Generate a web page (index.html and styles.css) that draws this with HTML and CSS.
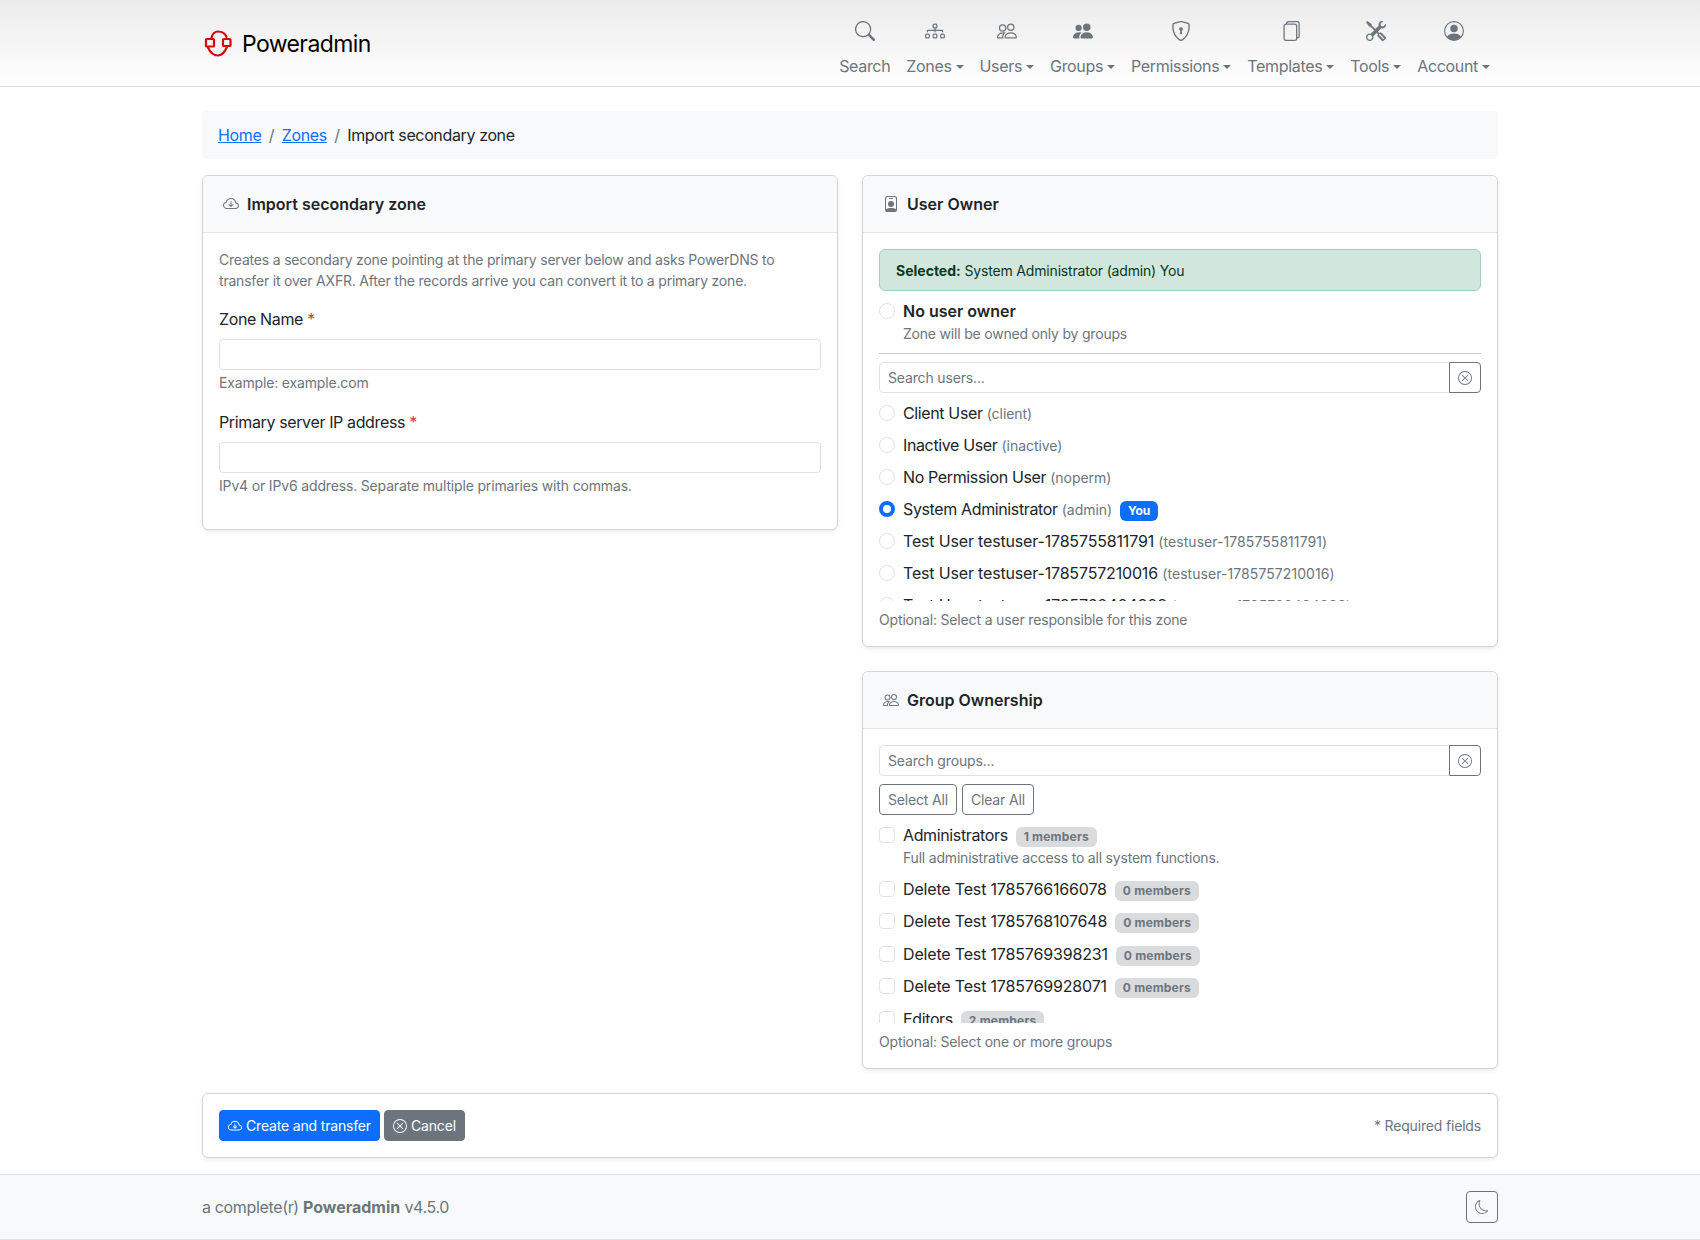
FILE: index.html
```html
<!DOCTYPE html>
<html lang="en">
<head>
<meta charset="utf-8">
<title>Poweradmin</title>
<link rel="stylesheet" href="styles.css">
</head>
<body>
<svg class="sprite" aria-hidden="true">
  <symbol id="i-search" viewBox="0 0 16 16"><path d="M11.742 10.344a6.5 6.5 0 1 0-1.397 1.398h-.001c.03.04.062.078.098.115l3.85 3.85a1 1 0 0 0 1.415-1.414l-3.85-3.85a1.007 1.007 0 0 0-.115-.1zM12 6.5a5.5 5.5 0 1 1-11 0 5.5 5.5 0 0 1 11 0z"/></symbol>
  <symbol id="i-diagram" viewBox="0 0 16 16"><path fill-rule="evenodd" d="M6 3.5A1.5 1.5 0 0 1 7.5 2h1A1.5 1.5 0 0 1 10 3.5v1A1.5 1.5 0 0 1 8.5 6v1H14a.5.5 0 0 1 .5.5v1a.5.5 0 0 1-1 0V8h-5v.5a.5.5 0 0 1-1 0V8h-5v.5a.5.5 0 0 1-1 0v-1A.5.5 0 0 1 2 7h5.5V6A1.5 1.5 0 0 1 6 4.5v-1zM8.5 5a.5.5 0 0 0 .5-.5v-1a.5.5 0 0 0-.5-.5h-1a.5.5 0 0 0-.5.5v1a.5.5 0 0 0 .5.5h1zM0 11.5A1.5 1.5 0 0 1 1.5 10h1A1.5 1.5 0 0 1 4 11.5v1A1.5 1.5 0 0 1 2.5 14h-1A1.5 1.5 0 0 1 0 12.5v-1zm1.5-.5a.5.5 0 0 0-.5.5v1a.5.5 0 0 0 .5.5h1a.5.5 0 0 0 .5-.5v-1a.5.5 0 0 0-.5-.5h-1zm4.5.5A1.5 1.5 0 0 1 7.5 10h1a1.5 1.5 0 0 1 1.5 1.5v1A1.5 1.5 0 0 1 8.5 14h-1A1.5 1.5 0 0 1 6 12.5v-1zm1.5-.5a.5.5 0 0 0-.5.5v1a.5.5 0 0 0 .5.5h1a.5.5 0 0 0 .5-.5v-1a.5.5 0 0 0-.5-.5h-1zm4.5.5a1.5 1.5 0 0 1 1.5-1.5h1a1.5 1.5 0 0 1 1.5 1.5v1a1.5 1.5 0 0 1-1.5 1.5h-1a1.5 1.5 0 0 1-1.5-1.5v-1zm1.5-.5a.5.5 0 0 0-.5.5v1a.5.5 0 0 0 .5.5h1a.5.5 0 0 0 .5-.5v-1a.5.5 0 0 0-.5-.5h-1z"/></symbol>
  <symbol id="i-people" viewBox="0 0 16 16"><path d="M15 14s1 0 1-1-1-4-5-4-5 3-5 4 1 1 1 1h8Zm-7.978-1A.261.261 0 0 1 7 12.996c.001-.264.167-1.03.76-1.72C8.312 10.629 9.282 10 11 10c1.717 0 2.687.63 3.24 1.276.593.69.758 1.457.76 1.72l-.008.002a.274.274 0 0 1-.014.002H7.022ZM11 7a2 2 0 1 0 0-4 2 2 0 0 0 0 4Zm3-2a3 3 0 1 1-6 0 3 3 0 0 1 6 0ZM6.936 9.28a5.88 5.88 0 0 0-1.23-.247A7.35 7.35 0 0 0 5 9c-4 0-5 3-5 4 0 .667.333 1 1 1h4.216A2.238 2.238 0 0 1 5 13c0-1.01.377-2.042 1.09-2.904.243-.294.526-.569.846-.816ZM4.92 10A5.493 5.493 0 0 0 4 13H1c0-.26.164-1.03.76-1.724.545-.636 1.492-1.256 3.16-1.275ZM1.5 5.5a3 3 0 1 1 6 0 3 3 0 0 1-6 0Zm3-2a2 2 0 1 0 0 4 2 2 0 0 0 0-4Z"/></symbol>
  <symbol id="i-people-fill" viewBox="0 0 16 16"><path d="M7 14s-1 0-1-1 1-4 5-4 5 3 5 4-1 1-1 1H7Zm4-6a3 3 0 1 0 0-6 3 3 0 0 0 0 6Zm-5.784 6A2.238 2.238 0 0 1 5 13c0-1.355.68-2.75 1.936-3.72A6.325 6.325 0 0 0 5 9c-4 0-5 3-5 4s1 1 1 1h4.216ZM4.5 8a2.5 2.5 0 1 0 0-5 2.5 2.5 0 0 0 0 5Z"/></symbol>
  <symbol id="i-shield" viewBox="0 0 16 16"><path d="M5.338 1.59a61.44 61.44 0 0 0-2.837.856.481.481 0 0 0-.328.39c-.554 4.157.726 7.19 2.253 9.188a10.725 10.725 0 0 0 2.287 2.233c.346.244.652.42.893.533.12.057.218.095.293.118a.55.55 0 0 0 .101.025.615.615 0 0 0 .1-.025c.076-.023.174-.061.294-.118.24-.113.547-.29.893-.533a10.726 10.726 0 0 0 2.287-2.233c1.527-1.997 2.807-5.031 2.253-9.188a.48.48 0 0 0-.328-.39c-.651-.213-1.75-.56-2.837-.855C9.552 1.29 8.531 1.067 8 1.067c-.53 0-1.552.223-2.662.524zM5.072.56C6.157.265 7.31 0 8 0s1.843.265 2.928.56c1.11.3 2.229.655 2.887.87a1.54 1.54 0 0 1 1.044 1.262c.596 4.477-.787 7.795-2.465 9.99a11.775 11.775 0 0 1-2.517 2.453 7.159 7.159 0 0 1-1.048.625c-.28.132-.581.24-.829.24s-.548-.108-.829-.24a7.158 7.158 0 0 1-1.048-.625 11.777 11.777 0 0 1-2.517-2.453C1.928 10.487.545 7.169 1.141 2.692A1.54 1.54 0 0 1 2.185 1.43 62.456 62.456 0 0 1 5.072.56z"/><path d="M9.5 6.5a1.5 1.5 0 0 1-1 1.415l.385 1.99a.5.5 0 0 1-.491.595h-.788a.5.5 0 0 1-.49-.595l.384-1.99a1.5 1.5 0 1 1 2-1.415z"/></symbol>
  <symbol id="i-files" viewBox="0 0 16 16"><path d="M13 0H6a2 2 0 0 0-2 2 2 2 0 0 0-2 2v10a2 2 0 0 0 2 2h7a2 2 0 0 0 2-2 2 2 0 0 0 2-2V2a2 2 0 0 0-2-2zm0 13V4a2 2 0 0 0-2-2H5a1 1 0 0 1 1-1h7a1 1 0 0 1 1 1v10a1 1 0 0 1-1 1zM3 4a1 1 0 0 1 1-1h7a1 1 0 0 1 1 1v10a1 1 0 0 1-1 1H4a1 1 0 0 1-1-1V4z"/></symbol>
  <symbol id="i-tools" viewBox="0 0 16 16"><path d="M1 0 0 1l2.2 3.081a1 1 0 0 0 .815.419h.07a1 1 0 0 1 .708.293l2.675 2.675-2.617 2.654A3.003 3.003 0 0 0 0 13a3 3 0 1 0 5.878-.851l2.654-2.617.968.968-.305.914a1 1 0 0 0 .242 1.023l3.27 3.27a.997.997 0 0 0 1.414 0l1.586-1.586a.997.997 0 0 0 0-1.414l-3.27-3.27a1 1 0 0 0-1.023-.242L10.5 9.5l-.96-.96 2.68-2.643A3.005 3.005 0 0 0 16 3c0-.269-.035-.53-.102-.777l-2.14 2.141L12 4l-.364-1.757L13.777.102a3 3 0 0 0-3.675 3.68L7.462 6.46 4.793 3.793a1 1 0 0 1-.293-.707v-.071a1 1 0 0 0-.419-.814L1 0Zm9.646 10.646a.5.5 0 0 1 .708 0l2.914 2.915a.5.5 0 0 1-.707.707l-2.915-2.914a.5.5 0 0 1 0-.708ZM3 11l.471.242.529.026.287.445.445.287.026.529L5 13l-.242.471-.026.529-.445.287-.287.445-.529.026L3 15l-.471-.242L2 14.732l-.287-.445L1.268 14l-.026-.529L1 13l.242-.471.026-.529.445-.287.287-.445.529-.026L3 11Z"/></symbol>
  <symbol id="i-person" viewBox="0 0 16 16"><path d="M11 6a3 3 0 1 1-6 0 3 3 0 0 1 6 0z"/><path fill-rule="evenodd" d="M0 8a8 8 0 1 1 16 0A8 8 0 0 1 0 8zm8-7a7 7 0 0 0-5.468 11.37C3.242 11.226 4.805 10 8 10s4.757 1.225 5.468 2.37A7 7 0 0 0 8 1z"/></symbol>
  <symbol id="i-cloud" viewBox="0 0 16 16"><path fill-rule="evenodd" d="M7.646 10.854a.5.5 0 0 0 .708 0l2-2a.5.5 0 0 0-.708-.708L8.5 9.293V5.5a.5.5 0 0 0-1 0v3.793L6.354 8.146a.5.5 0 1 0-.708.708l2 2z"/><path d="M4.406 3.342A5.53 5.53 0 0 1 8 2c2.69 0 4.923 2 5.166 4.579C14.758 6.804 16 8.137 16 9.773 16 11.569 14.502 13 12.687 13H3.781C1.708 13 0 11.366 0 9.318c0-1.763 1.266-3.223 2.942-3.593.143-.863.698-1.723 1.464-2.383zm.653.757c-.757.653-1.153 1.44-1.153 2.056v.448l-.445.049C2.064 6.805 1 7.952 1 9.318 1 10.785 2.23 12 3.781 12h8.906C13.98 12 15 10.988 15 9.773c0-1.216-1.02-2.228-2.313-2.228h-.5v-.5C12.188 4.825 10.328 3 8 3a4.53 4.53 0 0 0-2.941 1.1z"/></symbol>
  <symbol id="i-badge" viewBox="0 0 16 16"><path d="M6.5 2a.5.5 0 0 0 0 1h3a.5.5 0 0 0 0-1h-3zM11 8a3 3 0 1 1-6 0 3 3 0 0 1 6 0z"/><path d="M4.5 0A2.5 2.5 0 0 0 2 2.5V14a2 2 0 0 0 2 2h8a2 2 0 0 0 2-2V2.5A2.5 2.5 0 0 0 11.5 0h-7zM3 2.5A1.5 1.5 0 0 1 4.5 1h7A1.5 1.5 0 0 1 13 2.5v10.795a4.2 4.2 0 0 0-.776-.492C11.392 12.387 10.063 12 8 12s-3.392.387-4.224.803a4.2 4.2 0 0 0-.776.492V2.5z"/></symbol>
  <symbol id="i-x" viewBox="0 0 16 16"><path d="M8 15A7 7 0 1 1 8 1a7 7 0 0 1 0 14zm0 1A8 8 0 1 0 8 0a8 8 0 0 0 0 16z"/><path d="M4.646 4.646a.5.5 0 0 1 .708 0L8 7.293l2.646-2.647a.5.5 0 0 1 .708.708L8.707 8l2.647 2.646a.5.5 0 0 1-.708.708L8 8.707l-2.646 2.647a.5.5 0 0 1-.708-.708L7.293 8 4.646 5.354a.5.5 0 0 1 0-.708z"/></symbol>
  <symbol id="i-moon" viewBox="0 0 16 16"><path d="M6 .278a.768.768 0 0 1 .08.858 7.208 7.208 0 0 0-.878 3.46c0 4.021 3.278 7.277 7.318 7.277.527 0 1.04-.055 1.533-.16a.787.787 0 0 1 .81.316.733.733 0 0 1-.031.893A8.349 8.349 0 0 1 8.344 16C3.734 16 0 12.286 0 7.71 0 4.266 2.114 1.312 5.234.06A.752.752 0 0 1 6 .278zM4.858 1.311A7.269 7.269 0 0 0 1.025 7.71c0 4.02 3.279 7.276 7.319 7.276a7.316 7.316 0 0 0 5.205-2.162c-.337.042-.68.063-1.029.063-4.61 0-8.343-3.714-8.343-8.29 0-1.167.242-2.278.681-3.286z"/></symbol>
</svg>

<header class="topbar">
  <div class="container topbar-inner">
    <a class="brand" href="#">
      <svg class="brand-logo" viewBox="0 0 30 28">
        <path d="M9.500 8C10 4 13 1.500 16 1.500C20 1.500 23 3 24.500 7M6 17.500C8 22 12 25.500 16 25.500C20 25.500 23 21.500 25 17" stroke-linecap="round"/>
        <rect x="4" y="9" width="8" height="7.500" rx="0.800"/>
        <rect x="21" y="9" width="7.500" height="7" rx="0.800"/>
      </svg>
      <span class="brand-name">Poweradmin</span>
    </a>
    <nav class="nav">
      <a class="nav-link" href="#"><svg class="nav-icon"><use href="#i-search"/></svg><span>Search</span></a>
      <a class="nav-link" href="#"><svg class="nav-icon"><use href="#i-diagram"/></svg><span class="caret">Zones</span></a>
      <a class="nav-link" href="#"><svg class="nav-icon"><use href="#i-people"/></svg><span class="caret">Users</span></a>
      <a class="nav-link" href="#"><svg class="nav-icon"><use href="#i-people-fill"/></svg><span class="caret">Groups</span></a>
      <a class="nav-link" href="#"><svg class="nav-icon"><use href="#i-shield"/></svg><span class="caret">Permissions</span></a>
      <a class="nav-link" href="#"><svg class="nav-icon"><use href="#i-files"/></svg><span class="caret">Templates</span></a>
      <a class="nav-link" href="#"><svg class="nav-icon"><use href="#i-tools"/></svg><span class="caret">Tools</span></a>
      <a class="nav-link" href="#"><svg class="nav-icon"><use href="#i-person"/></svg><span class="caret">Account</span></a>
    </nav>
  </div>
</header>

<main class="container main">
  <ol class="breadcrumb">
    <li><a href="#">Home</a></li>
    <li class="crumb-sep">/</li>
    <li><a href="#">Zones</a></li>
    <li class="crumb-sep">/</li>
    <li>Import secondary zone</li>
  </ol>

  <div class="columns">
    <div class="column">
      <section class="card">
        <h2 class="card-header"><svg class="head-icon"><use href="#i-cloud"/></svg>Import secondary zone</h2>
        <div class="card-body">
          <p class="intro">Creates a secondary zone pointing at the primary server below and asks PowerDNS to transfer it over AXFR. After the records arrive you can convert it to a primary zone.</p>
          <label class="field-label">Zone Name <span class="req">*</span></label>
          <input class="input" type="text">
          <div class="help">Example: example.com</div>
          <label class="field-label field-gap">Primary server IP address <span class="req">*</span></label>
          <input class="input" type="text">
          <div class="help help-last">IPv4 or IPv6 address. Separate multiple primaries with commas.</div>
        </div>
      </section>
    </div>

    <div class="column">
      <section class="card">
        <h2 class="card-header"><svg class="head-icon"><use href="#i-badge"/></svg>User Owner</h2>
        <div class="card-body">
          <div class="alert"><strong>Selected:</strong> System Administrator (admin) You</div>
          <div class="option">
            <span class="radio"></span>
            <span class="option-strong">No user owner</span>
            <div class="note">Zone will be owned only by groups</div>
          </div>
          <hr class="rule">
          <div class="input-group">
            <input class="input" type="text" placeholder="Search users...">
            <button class="icon-btn" type="button"><svg class="x-icon"><use href="#i-x"/></svg></button>
          </div>
          <div class="scroll-list">
            <div class="option"><span class="radio"></span>Client User <span class="handle">(client)</span></div>
            <div class="option"><span class="radio"></span>Inactive User <span class="handle">(inactive)</span></div>
            <div class="option"><span class="radio"></span>No Permission User <span class="handle">(noperm)</span></div>
            <div class="option"><span class="radio radio-on"></span>System Administrator <span class="handle">(admin)</span><span class="badge badge-blue">You</span></div>
            <div class="option option-num"><span class="radio"></span>Test User testuser-1785755811791 <span class="handle">(testuser-1785755811791)</span></div>
            <div class="option option-num"><span class="radio"></span>Test User testuser-1785757210016 <span class="handle">(testuser-1785757210016)</span></div>
            <div class="option option-num"><span class="radio"></span>Test User testuser-1785760404808 <span class="handle">(testuser-1785760404808)</span></div>
          </div>
          <div class="help help-end">Optional: Select a user responsible for this zone</div>
        </div>
      </section>

      <section class="card">
        <h2 class="card-header"><svg class="head-icon"><use href="#i-people"/></svg>Group Ownership</h2>
        <div class="card-body">
          <div class="input-group">
            <input class="input" type="text" placeholder="Search groups...">
            <button class="icon-btn" type="button"><svg class="x-icon"><use href="#i-x"/></svg></button>
          </div>
          <div class="btn-row">
            <button class="btn btn-outline" type="button">Select All</button>
            <button class="btn btn-outline" type="button">Clear All</button>
          </div>
          <div class="scroll-list scroll-list-groups">
            <div class="option option-first"><span class="check"></span>Administrators<span class="badge badge-grey">1 members</span>
              <div class="note">Full administrative access to all system functions.</div></div>
            <div class="option option-num"><span class="check"></span>Delete Test 1785766166078<span class="badge badge-grey">0 members</span></div>
            <div class="option option-num"><span class="check"></span>Delete Test 1785768107648<span class="badge badge-grey">0 members</span></div>
            <div class="option option-num"><span class="check"></span>Delete Test 1785769398231<span class="badge badge-grey">0 members</span></div>
            <div class="option option-num"><span class="check"></span>Delete Test 1785769928071<span class="badge badge-grey">0 members</span></div>
            <div class="option"><span class="check"></span>Editors<span class="badge badge-grey">2 members</span></div>
          </div>
          <div class="help help-end">Optional: Select one or more groups</div>
        </div>
      </section>
    </div>
  </div>

  <section class="card action-card">
    <div class="actions">
      <button class="btn btn-primary" type="button"><svg class="btn-icon"><use href="#i-cloud"/></svg>Create and transfer</button>
      <button class="btn btn-secondary" type="button"><svg class="btn-icon"><use href="#i-x"/></svg>Cancel</button>
    </div>
    <span class="required-note">* Required fields</span>
  </section>
</main>

<footer class="footer">
  <div class="container footer-inner">
    <span>a complete(r) <strong>Poweradmin</strong> v4.5.0</span>
    <button class="moon-btn" type="button"><svg class="moon-icon"><use href="#i-moon"/></svg></button>
  </div>
</footer>
</body>
</html>
```

FILE: styles.css
```css
* { box-sizing: border-box; }
html, body { margin: 0; padding: 0; }
body {
  font-family: Inter, "Liberation Sans", sans-serif;
  font-size: 16px;
  line-height: 24px;
  letter-spacing: -0.37px;
  color: #212529;
  background: #fff;
}
.sprite { display: none; }
svg { fill: currentColor; }
.container { width: 1296px; margin: 0 auto; }

/* Header */
.topbar {
  height: 87px;
  border-bottom: 1px solid #dee2e6;
  background: linear-gradient(180deg, #ebebeb 0%, #ffffff 100%);
}
.topbar-inner { display: flex; justify-content: space-between; align-items: flex-start; padding-top: 13px; }
.brand { display: flex; align-items: center; gap: 10px; color: #000; text-decoration: none; margin-top: 17px; }
.brand-logo { width: 30px; height: 28px; fill: none; stroke: #d40b0b; stroke-width: 2.2; }
.brand-name { font-size: 23px; line-height: 28px; letter-spacing: -0.6px; }
.nav { display: flex; }
.nav-link { display: flex; flex-direction: column; align-items: center; padding: 8px; letter-spacing: -0.33px; color: #6c757d; text-decoration: none; }
.nav-icon { width: 20px; height: 20px; margin-bottom: 13px; }
.caret::after {
  content: "";
  display: inline-block;
  margin-left: 4px;
  vertical-align: 3px;
  border-top: 4.8px solid currentColor;
  border-left: 4.8px solid transparent;
  border-right: 4.8px solid transparent;
}

/* Main */
.main { padding-top: 24px; }
.breadcrumb {
  display: flex;
  gap: 7.5px;
  list-style: none;
  margin: 0 0 16px;
  padding: 12px 16px;
  background: #f8f9fa;
  border-radius: 4px;
}
.breadcrumb a { color: #0d6efd; }
.crumb-sep { color: #6c757d; }

.columns { display: grid; grid-template-columns: 636px 636px; column-gap: 24px; align-items: start; }
.column { display: flex; flex-direction: column; gap: 24px; }
.card {
  background: #fff;
  border: 1px solid #d3d4d5;
  border-radius: 6px;
  box-shadow: 0 2px 4px rgba(0, 0, 0, .075);
}
.card-header {
  display: flex;
  align-items: center;
  height: 57px;
  margin: 0;
  padding: 0 16px 0 20px;
  font-size: 16px;
  font-weight: 600;
  line-height: 24px;
  letter-spacing: 0;
  background: #f8f9fa;
  border-bottom: 1px solid #e3e5e8;
  border-radius: 5px 5px 0 0;
}
.head-icon { width: 16px; height: 16px; margin-right: 8px; color: #6c757d; }
.card-body { padding: 16px; }

.intro { margin: 0 0 16px; font-size: 14px; line-height: 21px; letter-spacing: -0.2px; color: #6c757d; }
.field-label { display: block; margin-bottom: 8px; }
.field-gap { margin-top: 17px; }
.req { color: #dc3545; }
.input {
  display: block;
  width: 100%;
  height: 31px;
  padding: 4px 8px;
  font: 14px/21px Inter, "Liberation Sans", sans-serif;
  letter-spacing: -0.15px;
  color: #212529;
  background: #fff;
  border: 1px solid #dee2e6;
  border-radius: 4px;
}
.input::placeholder { color: #6c757d; opacity: 1; }
.help { margin-top: 2px; font-size: 14px; line-height: 21px; letter-spacing: -0.16px; color: #6c757d; }
.help-last { margin-bottom: 17px; }
.help-end { margin-top: 8px; }

.alert {
  height: 42px;
  margin-bottom: 8px;
  padding: 10px 16px;
  font-size: 14px;
  line-height: 21px;
  letter-spacing: -0.17px;
  color: #0a3622;
  background: #d1e7dd;
  border: 1px solid #a3cfbb;
  border-radius: 6px;
}
.alert strong { font-weight: 700; letter-spacing: 0; }

.option { position: relative; padding-left: 24px; margin-bottom: 8px; }
.option-num { letter-spacing: -0.17px; }
.radio, .check {
  position: absolute;
  left: 0;
  top: 4px;
  width: 16px;
  height: 16px;
  background: #fff;
  border: 1px solid #dee2e6;
}
.radio { border-radius: 50%; }
.check { border-radius: 4px; }
.radio-on { border: 4.500px solid #0d6efd; }
.option-strong { font-weight: 600; letter-spacing: 0; }
.note { font-size: 14px; line-height: 21px; letter-spacing: -0.2px; color: #6c757d; }
.rule { margin: 9px 0 8px; border: 0; border-top: 1px solid #c4c6c8; }
.handle { font-size: 14px; line-height: 1; letter-spacing: -0.05px; color: #6c757d; }
.option-num .handle { letter-spacing: 0.06px; }

.input-group { display: flex; }
.input-group .input { flex: 1; border-radius: 4px 0 0 4px; }
.icon-btn {
  display: flex;
  align-items: center;
  justify-content: center;
  width: 32px;
  height: 31px;
  margin-left: -1px;
  padding: 0;
  color: #6c757d;
  background: #fff;
  border: 1px solid #6c757d;
  border-radius: 0 4px 4px 0;
}
.x-icon { width: 14px; height: 14px; }
.scroll-list { height: 200px; margin-top: 8px; overflow: hidden; }
.scroll-list-groups .option { margin-bottom: 8.4px; }
.scroll-list-groups .option-first { margin-bottom: 9px; }

.badge {
  display: inline-block;
  margin-left: 8px;
  padding: 4px 8px;
  font-size: 12px;
  font-weight: 700;
  line-height: 12px;
  letter-spacing: 0.2px;
  border-radius: 6px;
  vertical-align: 0;
}
.badge-blue { margin-top: -2px; margin-bottom: -2px; color: #fff; background: #0d6efd; letter-spacing: 0; }
.badge-grey { color: #6c757d; background: #dadbdd; }

.btn {
  display: inline-flex;
  align-items: center;
  height: 31px;
  padding: 4px 8px;
  font: 14px/21px Inter, "Liberation Sans", sans-serif;
  letter-spacing: -0.17px;
  border-radius: 4px;
  border: 1px solid transparent;
}
.btn-row { display: flex; gap: 5px; margin-top: 8px; }
.btn-outline { color: #6c757d; background: #fff; border-color: #6c757d; }
.btn-primary { color: #fff; background: #0d6efd; border-color: #0d6efd; }
.btn-secondary { color: #fff; background: #6c757d; border-color: #6c757d; }
.btn-icon { width: 14px; height: 14px; margin-right: 4px; }

.action-card {
  display: flex;
  justify-content: space-between;
  align-items: center;
  margin-top: 24px;
  padding: 16px;
}
.actions { display: flex; gap: 4px; }
.required-note { font-size: 14px; letter-spacing: -0.17px; color: #6c757d; }

/* Footer */
.footer {
  margin-top: 16px;
  height: 66px;
  letter-spacing: -0.35px;
  background: #f8f9fa;
  border-top: 1px solid #dee2e6;
  border-bottom: 1px solid #dee2e6;
}
.footer-inner { display: flex; justify-content: space-between; align-items: center; height: 64px; color: #6c757d; }
.footer strong { font-weight: 700; letter-spacing: 0; }
.moon-btn {
  display: flex;
  align-items: center;
  justify-content: center;
  width: 32px;
  height: 32px;
  padding: 0;
  color: #6c757d;
  background: transparent;
  border: 1px solid #6c757d;
  border-radius: 4px;
}
.moon-icon { width: 14px; height: 14px; }
```
